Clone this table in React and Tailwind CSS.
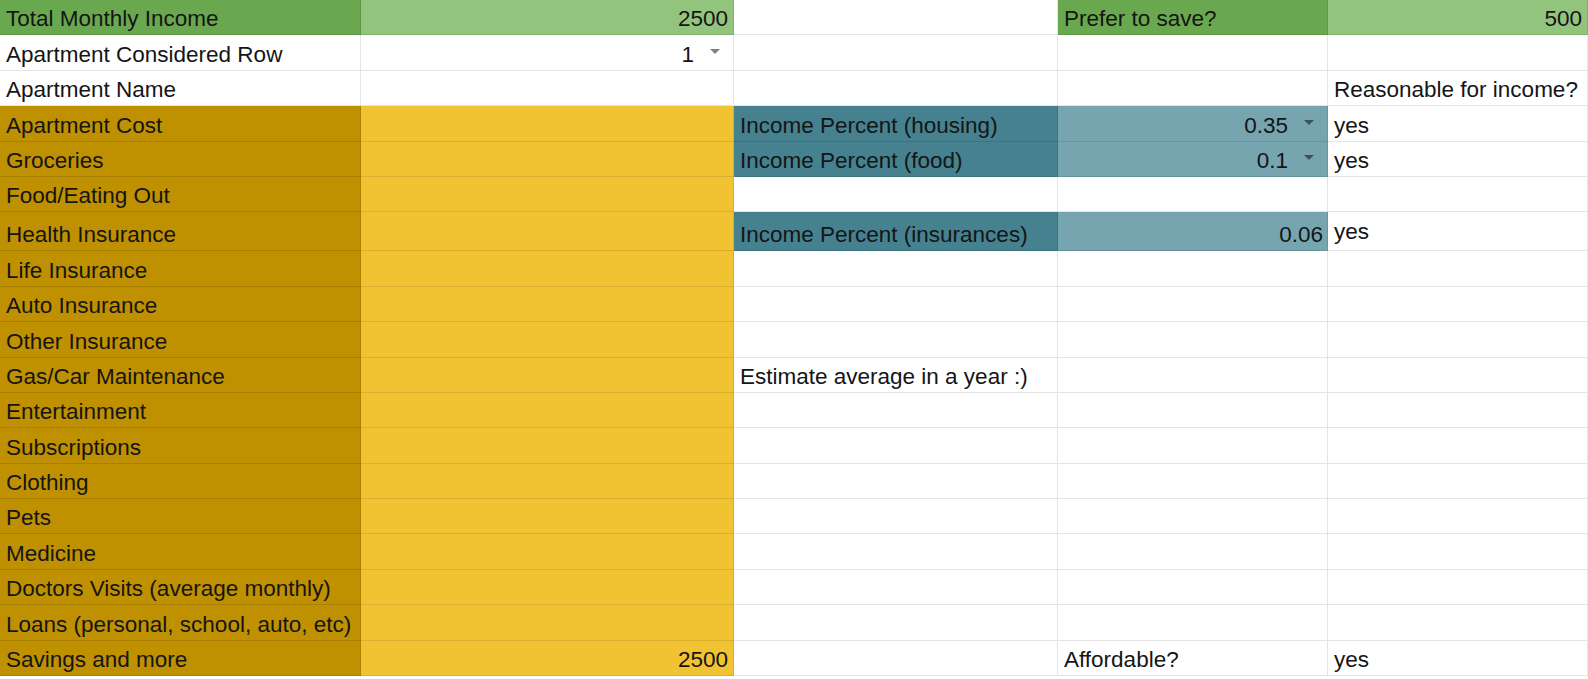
import React from 'react';

const GREEN = 'bg-[#6aa84f]';
const LIGHT_GREEN = 'bg-[#93c47d]';
const DARK_YELLOW = 'bg-[#bf9000]';
const YELLOW = 'bg-[#f1c232]';
const DARK_TEAL = 'bg-[#45818e]';
const LIGHT_TEAL = 'bg-[#76a5af]';

const labels = [
  'Apartment Cost',
  'Groceries',
  'Food/Eating Out',
  'Health Insurance',
  'Life Insurance',
  'Auto Insurance',
  'Other Insurance',
  'Gas/Car Maintenance',
  'Entertainment',
  'Subscriptions',
  'Clothing',
  'Pets',
  'Medicine',
  'Doctors Visits (average monthly)',
  'Loans (personal, school, auto, etc)',
];

const Arrow = () => (
  <svg width="10" height="5" viewBox="0 0 10 5" className="shrink-0 mb-[13px]">
    <polygon points="0,0 10,0 5,5" fill="rgba(0,0,0,0.5)" />
  </svg>
);

const Cell = ({ children, bg = 'bg-white', right, drop, extra = '' }) => (
  <div
    className={`${bg} border-r border-b border-black/10 flex items-end overflow-visible whitespace-nowrap pb-[3px] ${
      right ? 'justify-end' : 'justify-start'
    } ${drop ? 'gap-[16px] pr-[13px]' : right ? 'pr-[5px]' : 'pl-[6px]'} ${extra}`}
  >
    {children !== undefined && <span className="leading-[25px]">{children}</span>}
    {drop && <Arrow />}
  </div>
);

const App = () => {
  const rows = [];

  rows.push([
    <Cell bg={GREEN}>Total Monthly Income</Cell>,
    <Cell bg={LIGHT_GREEN} right>2500</Cell>,
    <Cell />,
    <Cell bg={GREEN}>Prefer to save?</Cell>,
    <Cell bg={LIGHT_GREEN} right>500</Cell>,
  ]);
  rows.push([
    <Cell>Apartment Considered Row</Cell>,
    <Cell right drop>1</Cell>,
    <Cell />,
    <Cell />,
    <Cell />,
  ]);
  rows.push([
    <Cell>Apartment Name</Cell>,
    <Cell />,
    <Cell />,
    <Cell />,
    <Cell>Reasonable for income?</Cell>,
  ]);

  labels.forEach((label, i) => {
    let c = <Cell />;
    let d = <Cell />;
    let e = <Cell />;
    if (i === 0) {
      c = <Cell bg={DARK_TEAL}>Income Percent (housing)</Cell>;
      d = <Cell bg={LIGHT_TEAL} right drop>0.35</Cell>;
      e = <Cell>yes</Cell>;
    } else if (i === 1) {
      c = <Cell bg={DARK_TEAL}>Income Percent (food)</Cell>;
      d = <Cell bg={LIGHT_TEAL} right drop>0.1</Cell>;
      e = <Cell>yes</Cell>;
    } else if (i === 3) {
      c = <Cell bg={DARK_TEAL}>Income Percent (insurances)</Cell>;
      d = <Cell bg={LIGHT_TEAL} right extra="!pr-[4px]">0.06</Cell>;
      e = <Cell extra="!pb-[6px]">yes</Cell>;
    } else if (i === 7) {
      c = <Cell>Estimate average in a year :)</Cell>;
    }
    rows.push([
      <Cell bg={DARK_YELLOW}>{label}</Cell>,
      <Cell bg={YELLOW} />,
      c,
      d,
      e,
    ]);
  });

  rows.push([
    <Cell bg={DARK_YELLOW}>Savings and more</Cell>,
    <Cell bg={YELLOW} right>2500</Cell>,
    <Cell />,
    <Cell>Affordable?</Cell>,
    <Cell>yes</Cell>,
  ]);

  return (
    <div className="w-[1588px] h-[679px] bg-white overflow-hidden font-['Liberation_Sans',Arial,sans-serif] text-[22.5px] text-[#151515]">
      <div className="grid grid-cols-[361px_373px_324px_270px_260px] grid-rows-[repeat(6,35.4px)_39px_repeat(12,35.4px)]">
        {rows.map((cells, r) =>
          cells.map((cell, c) => <React.Fragment key={`${r}-${c}`}>{cell}</React.Fragment>)
        )}
      </div>
    </div>
  );
};

export default App;
